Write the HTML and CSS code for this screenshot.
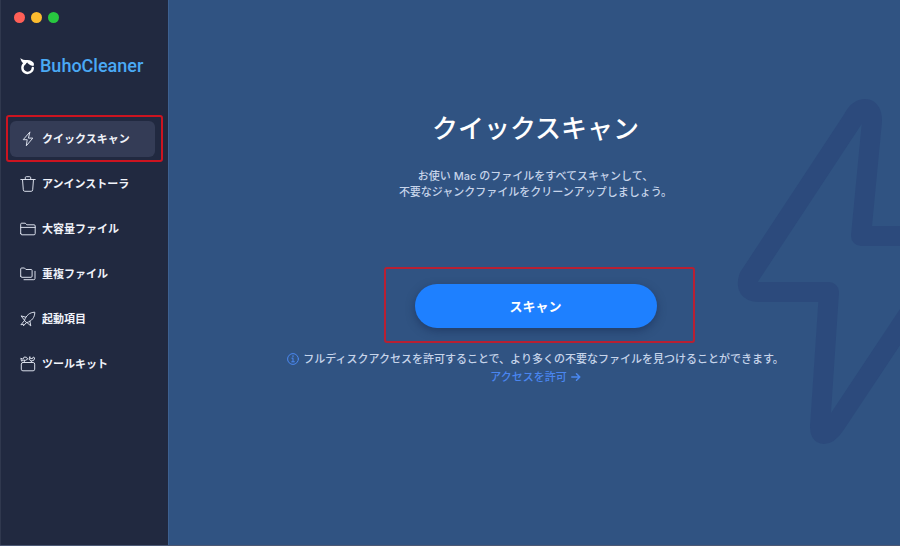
FILE: index.html
```html
<!DOCTYPE html>
<html lang="ja">
<head>
    <meta charset="UTF-8">
    <meta name="viewport" content="width=device-width, initial-scale=1.0">
    <title>BuhoCleaner</title>
    <link rel="stylesheet" href="styles.css">
</head>
<body>
    <div class="window">
        <aside class="sidebar">
            <div class="window-controls">
                <button type="button" class="dot dot-close" aria-label="閉じる"></button>
                <button type="button" class="dot dot-minimize" aria-label="最小化"></button>
                <button type="button" class="dot dot-zoom" aria-label="拡大"></button>
            </div>

            <div class="brand">
                <svg class="brand-logo" viewBox="0 0 16 18" aria-hidden="true">
                    <path d="M.4 1C2 2.600 4 3.100 7.500 3.100c3.200 0 5.200 1.200 6.300 3.400L11 6.600 8 5.400 4 6.800C2 5.600.8 3.600.4 1Z" fill="#fff"/>
                    <path d="M5 6.200A5.200 5.200 0 1 0 12.800 11" stroke="#fff" stroke-width="2.400"/>
                    <path d="M8 4.500L13.500 5.800Q14.400 7.500 13.500 9C11.500 8.900 9.500 8 7.500 6Z" fill="#fff"/>
                </svg>
                <span>BuhoCleaner</span>
            </div>

            <nav class="menu">
                <a href="#quick" class="menu-item active highlight">
                    <svg class="icon" viewBox="0 0 16 16" aria-hidden="true">
                        <path d="M9.700 1.200L3.200 8.700h4l-.9 6.100 6.500-7.700H8.800z"/>
                    </svg>
                    クイックスキャン
                </a>
                <a href="#uninstall" class="menu-item">
                    <svg class="icon" viewBox="0 0 16 16" aria-hidden="true">
                        <path d="M.8 3.500h14.400M5.300 3.300V1.700q0-1 1-1h3.400q1 0 1 1v1.600M2.500 3.500l.8 10.300q.1 1.500 1.500 1.500h6.400q1.400 0 1.500-1.500l.8-10.300"/>
                    </svg>
                    アンインストーラ
                </a>
                <a href="#large" class="menu-item">
                    <svg class="icon" viewBox="0 0 16 16" aria-hidden="true">
                        <path d="M.7 12.600V3.200q0-1 1-1h3.600l1.500 1.600h7.200q1.200 0 1.200 1.200v7.600q0 1.200-1.200 1.200H1.900q-1.200 0-1.200-1.200zM.7 6.400h14.500"/>
                    </svg>
                    大容量ファイル
                </a>
                <a href="#duplicate" class="menu-item">
                    <svg class="icon" viewBox="0 0 16 16" aria-hidden="true">
                        <path d="M.7 10.200V3q0-1 1-1h2.800l1.400 1.500h5.200q1 0 1 1v5.700q0 1.100-1.100 1.100H1.800q-1.100 0-1.100-1.100zM4 13.700h9.800q1.200 0 1.200-1.200V5.300"/>
                    </svg>
                    重複ファイル
                </a>
                <a href="#startup" class="menu-item">
                    <svg class="icon" viewBox="0 0 16 16" aria-hidden="true">
                        <path d="M4.500 9.200C6.200 4.500 9.500 1.300 14.800 1.200 14.800 6.500 11.800 10 7 11.600zM5.700 6.200L1 4.900l3.500 4.300M9.900 10.200l.9 4.700L7 11.600M4.600 9.400L.9 13.800l2.400-.6.2 1.600 3-3.300"/>
                    </svg>
                    起動項目
                </a>
                <a href="#toolkit" class="menu-item">
                    <svg class="icon" viewBox="0 0 16 16" aria-hidden="true">
                        <rect x="1.300" y="6.500" width="13.400" height="8.300" rx="1.600"/>
                        <path d="M4.300 6.500V4.200M11.300 6.500V5M1.200 2.400l1.700.8L4.200 1l2.300.3 1.200 1.800-2.300 1.300-2-.2-1.500.8zM9.700 1L9 3.300 11.300 5l2.500-.7.9-2.400-1.500-.9-.6 1.600h-1.900z"/>
                    </svg>
                    ツールキット
                </a>
            </nav>
        </aside>

        <main class="content">
            <svg class="bolt" viewBox="0 0 170 360" aria-hidden="true">
                <path d="M190 146H131L142 31Q142 19 135 19Q128 19 123 29L19 187Q14 202 29 202H99L90 337Q90 344 94 344Q99 344 105 335L190 207"/>
            </svg>

            <h1>クイックスキャン</h1>
            <p class="lead">お使い Mac のファイルをすべてスキャンして、<br>不要なジャンクファイルをクリーンアップしましょう。</p>

            <div class="scan-area highlight">
                <button type="button" class="scan-button">スキャン</button>
            </div>

            <p class="notice">
                <svg class="info" viewBox="0 0 12 12" aria-hidden="true">
                    <circle cx="6" cy="6" r="5.400"/>
                    <path d="M6 2.600v1.300M4.900 5.200H6v3.500M4.700 8.800h2.700"/>
                </svg>
                フルディスクアクセスを許可することで、より多くの不要なファイルを見つけることができます。
            </p>
            <a href="#access" class="access-link">
                アクセスを許可
                <svg class="arrow" viewBox="0 0 10 10" aria-hidden="true">
                    <path d="M.8 5h8M5.500 1.700L8.800 5 5.500 8.300"/>
                </svg>
            </a>
        </main>
    </div>
</body>
</html>
```
FILE: styles.css
```css
* {
    box-sizing: border-box;
}
body {
    margin: 0;
    font-family: Inter, "Noto Sans CJK JP", sans-serif;
    font-size: 11px;
    line-height: 16px;
    color: #fff;
}
a {
    text-decoration: none;
}
button {
    border: none;
    font-family: inherit;
    cursor: pointer;
}
svg {
    flex-shrink: 0;
    fill: none;
    stroke-linecap: round;
    stroke-linejoin: round;
}
.window {
    display: flex;
    min-height: 100vh;
    border-bottom: 1px solid #4c5874;
    background-color: #305382;
}

/* sidebar */
.sidebar {
    flex: 0 0 169px;
    border-left: 1px solid #30384e;
    border-right: 1px solid #3d6090;
    background-color: #212940;
}
.window-controls {
    display: flex;
    gap: 6px;
    padding: 12px 13px;
}
.dot {
    width: 11px;
    height: 11px;
    padding: 0;
    border-radius: 50%;
}
.dot-close {
    background-color: #ff5f57;
}
.dot-minimize {
    background-color: #fcbc2f;
}
.dot-zoom {
    background-color: #28c840;
}
.brand {
    display: flex;
    align-items: center;
    gap: 4px;
    margin-top: 19px;
    padding-left: 19px;
    font-family: Roboto, sans-serif;
    font-size: 18px;
    line-height: 24px;
    font-weight: 500;
    color: #4aa9f5;
}
.brand-logo {
    width: 16px;
    height: 18px;
    stroke: none;
}
.menu {
    display: flex;
    flex-direction: column;
    gap: 9px;
    margin-top: 43px;
    padding: 0 13px 0 9px;
}
.menu-item {
    display: flex;
    align-items: center;
    gap: 6px;
    height: 36px;
    padding-left: 10px;
    border-radius: 6px;
    font-weight: 700;
    color: #f0f3fa;
}
.menu-item.active {
    background-color: #343c56;
}
.icon {
    width: 16px;
    height: 16px;
    stroke: #d9deea;
}

/* red frames */
.highlight {
    position: relative;
}
.highlight::after {
    content: "";
    position: absolute;
    inset: -6px -8px -5px -4px;
    border: 2px solid #cc1420;
    border-radius: 3px;
    pointer-events: none;
}

/* content */
.content {
    position: relative;
    flex: 1;
    display: flex;
    flex-direction: column;
    align-items: center;
    padding: 109px 0 20px 2px;
    overflow: hidden;
}
.bolt {
    position: absolute;
    top: 90px;
    right: 0;
    width: 170px;
    height: 360px;
    stroke: #2c4a7c;
    stroke-width: 20;
}
h1 {
    position: relative;
    margin: 0;
    font-size: 26px;
    line-height: 40px;
    font-weight: 500;
}
.lead {
    position: relative;
    margin: 19px 0 0;
    font-weight: 500;
    text-align: center;
    color: #c6d4ea;
}
.scan-area {
    margin-top: 84px;
}
.scan-area::after {
    inset: -17px -38px -15px -31px;
    border-color: #b82032;
}
.scan-button {
    display: block;
    width: 242px;
    height: 44px;
    border-radius: 22px;
    background-color: #1e80ff;
    box-shadow: 0 3px 8px rgba(20, 40, 80, 0.5);
    font-size: 13px;
    line-height: 16px;
    font-weight: 700;
    color: #fff;
}
.notice {
    position: relative;
    display: flex;
    align-items: center;
    gap: 4px;
    margin: 23px 0 0;
    font-weight: 500;
    color: #c6d4ea;
}
.info {
    width: 12px;
    height: 12px;
    stroke: #4a88f0;
}
.access-link {
    position: relative;
    display: flex;
    align-items: center;
    gap: 4px;
    margin-top: 2px;
    font-weight: 500;
    color: #4a86f0;
}
.arrow {
    width: 10px;
    height: 10px;
    stroke: #4a88f0;
    stroke-width: 1.5;
}
```
